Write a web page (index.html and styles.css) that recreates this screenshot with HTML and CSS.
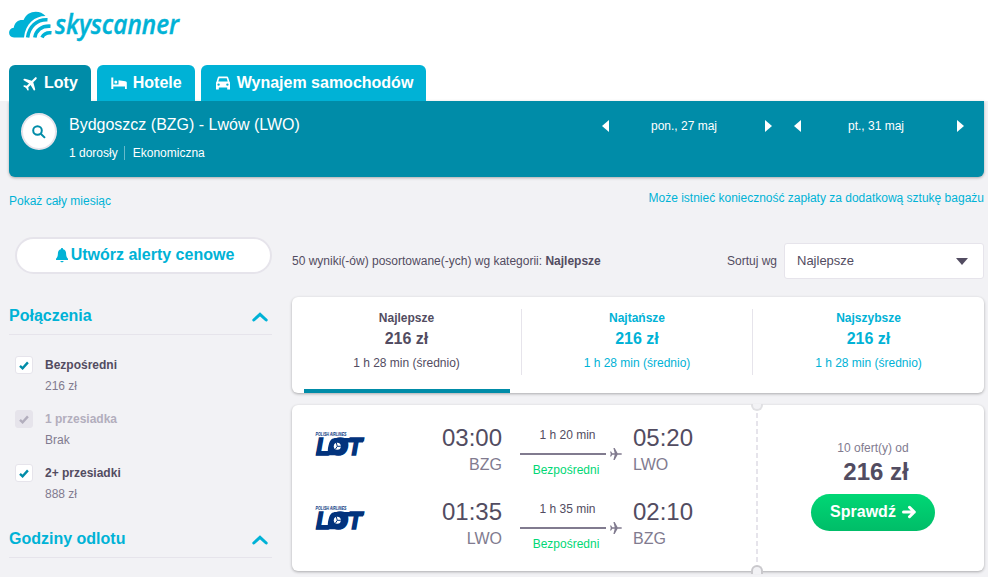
FILE: index.html
```
<!DOCTYPE html>
<html lang="pl">
<head>
    <meta charset="UTF-8">
    <meta name="viewport" content="width=device-width, initial-scale=1.0">
    <title>Skyscanner - Bydgoszcz - Lwów</title>
    <link rel="stylesheet" href="styles.css">
</head>
<body>
    <!-- shared icons -->
    <svg class="sprite" width="0" height="0">
        <symbol id="plane" viewBox="0 0 12 12">
            <path d="M12 6c0-.5-.6-.8-1.400-.8H7.600L4.700 0H3.400l1.300 5.200H2.300L1.100 3.500H0L.8 6 0 8.500h1.100l1.200-1.700h2.400L3.400 12h1.300l2.900-5.200h3c.8 0 1.400-.3 1.400-.8z"/>
        </symbol>
        <symbol id="check" viewBox="0 0 10 9">
            <path d="M1 4.800l2.600 2.500L8.900 1.400" fill="none" stroke="currentColor" stroke-width="2.400"/>
        </symbol>
        <symbol id="chevron" viewBox="0 0 16 10">
            <path d="M1.800 8L8 2.300 14.200 8" fill="none" stroke="currentColor" stroke-width="3" stroke-linecap="round"/>
        </symbol>
        <symbol id="lot" viewBox="0 0 50 26">
            <text class="lot-small" x="0.500" y="5" textLength="31" lengthAdjust="spacingAndGlyphs">POLISH AIRLINES</text>
            <text class="lot-big" x="1" y="23.700" textLength="46" lengthAdjust="spacingAndGlyphs">LOT</text>
            <g class="lot-fill">
                <path d="M1 24.300L2 20h13v4.300z"/>
                <path d="M15.500 24.300C12 24.300 12.500 18 13.800 13.500 15 9 17 7 21 7h9c3 0 3.200 4 2 8.500-1.500 6-4 8.800-8 8.800z"/>
                <path d="M24 7h25.200L48 11.500H24z"/>
            </g>
            <circle cx="22.300" cy="15.300" r="3.500" fill="#fff"/>
            <path d="M22.300 15.300h3.500M22.300 15.300l-1-3.500M22.300 15.300l-2 3" class="lot-line"/>
        </symbol>
    </svg>

    <header class="header">
        <div class="container">
            <svg class="logo" width="174" height="34" viewBox="0 0 174 34">
                <path d="M5 26.500C-1.500 26.500-1.500 17.300 4.800 16.800 5.500 10.800 10 8.300 14.600 9 18-.8 31-1.800 36.500 5 26 5 16.500 12.500 15 26.500z"/>
                <g class="logo-waves">
                    <path d="M18.600 26.500C20 16 27.500 8.300 38.500 8.800"/>
                    <path d="M25.800 26.500C27 20 32 14.700 41.500 15.200"/>
                    <path d="M33 26.500C34.500 23.300 38 21.300 42.500 21.800"/>
                </g>
                <text class="logo-text" x="46" y="23" textLength="124" lengthAdjust="spacingAndGlyphs">skyscanner</text>
            </svg>
            <nav class="tabs">
                <a class="tab active">
                    <svg class="tab-plane" width="16" height="16" viewBox="0 0 12 12"><use href="#plane"/></svg>
                    Loty
                </a>
                <a class="tab">
                    <svg width="16" height="16" viewBox="0 0 16 16">
                        <path d="M.3 2.500h2v7h5.200V5.300l6.800.9c1 .1 1.500.7 1.500 1.500V14h-1.800v-2.500H2.300V14h-2z"/>
                        <circle cx="4.800" cy="7" r="1.500"/>
                    </svg>
                    Hotele
                </a>
                <a class="tab">
                    <svg width="16" height="16" viewBox="0 0 16 16">
                        <path fill-rule="evenodd" d="M4 1.500h8c.6 0 1 .3 1.200.9l1.300 4.300c.3.300.5.700.5 1.100V14.500h-2.800v-2H3.800v2H1V7.800c0-.4.200-.8.500-1.100l1.300-4.300c.2-.6.600-.9 1.200-.9zM4.300 3.200L3.300 6.500h9.400l-1-3.300zM3.600 8.400a1.200 1.200 0 1 0 0 2.400 1.200 1.200 0 0 0 0-2.400zM12.400 8.400a1.200 1.200 0 1 0 0 2.400 1.200 1.200 0 0 0 0-2.400z"/>
                    </svg>
                    Wynajem samochodów
                </a>
            </nav>
        </div>
    </header>

    <div class="container">
        <section class="search">
            <button class="search-btn">
                <svg width="14" height="14" viewBox="0 0 14 14">
                    <circle cx="5.500" cy="5.500" r="4.300"/>
                    <path d="M8.700 8.700l4.300 4.200"/>
                </svg>
            </button>
            <div class="search-info">
                <div class="route">Bydgoszcz (BZG) - Lwów (LWO)</div>
                <div class="details"><span>1 dorosły</span><span class="cabin">Ekonomiczna</span></div>
            </div>
            <div class="dates">
                <div class="date">
                    <i class="arrow left"></i><span>pon., 27 maj</span><i class="arrow right"></i>
                </div>
                <div class="date">
                    <i class="arrow left"></i><span>pt., 31 maj</span><i class="arrow right"></i>
                </div>
            </div>
        </section>

        <div class="links">
            <a class="month">Pokaż cały miesiąc</a>
            <a>Może istnieć konieczność zapłaty za dodatkową sztukę bagażu</a>
        </div>

        <div class="content">
            <aside class="sidebar">
                <button class="alert-btn">
                    <svg width="12" height="15" viewBox="0 0 12 15">
                        <path d="M6 0c.7 0 1.100.5 1.100 1.200C9.200 1.700 10 3.500 10.100 5.500c.1 2.700.5 4 1.900 5.200V12H0v-1.300c1.400-1.200 1.800-2.500 1.900-5.200C2 3.500 2.800 1.700 4.900 1.200 4.900.5 5.300 0 6 0zM4.300 13h3.400c-.2.900-.9 1.300-1.700 1.300S4.500 13.900 4.300 13z"/>
                    </svg>
                    Utwórz alerty cenowe
                </button>

                <h2 class="filter-title">Połączenia <svg width="16" height="10"><use href="#chevron"/></svg></h2>
                <ul class="filters">
                    <li>
                        <span class="checkbox"><svg width="10" height="9"><use href="#check"/></svg></span>
                        <div><b>Bezpośredni</b><span>216 zł</span></div>
                    </li>
                    <li class="disabled">
                        <span class="checkbox"><svg width="10" height="9"><use href="#check"/></svg></span>
                        <div><b>1 przesiadka</b><span>Brak</span></div>
                    </li>
                    <li>
                        <span class="checkbox"><svg width="10" height="9"><use href="#check"/></svg></span>
                        <div><b>2+ przesiadki</b><span>888 zł</span></div>
                    </li>
                </ul>
                <h2 class="filter-title">Godziny odlotu <svg width="16" height="10"><use href="#chevron"/></svg></h2>
            </aside>

            <main class="results">
                <div class="toolbar">
                    <div class="count">50 wyniki(-ów) posortowane(-ych) wg kategorii: <b>Najlepsze</b></div>
                    <div class="sort">
                        Sortuj wg
                        <div class="select">Najlepsze <i class="caret"></i></div>
                    </div>
                </div>

                <div class="card sort-tabs">
                    <div class="sort-tab active">
                        <b>Najlepsze</b>
                        <strong>216 zł</strong>
                        <span>1 h 28 min (średnio)</span>
                    </div>
                    <div class="sort-tab">
                        <b>Najtańsze</b>
                        <strong>216 zł</strong>
                        <span>1 h 28 min (średnio)</span>
                    </div>
                    <div class="sort-tab">
                        <b>Najszybsze</b>
                        <strong>216 zł</strong>
                        <span>1 h 28 min (średnio)</span>
                    </div>
                </div>

                <div class="card ticket">
                    <div class="legs">
                        <div class="leg">
                            <svg class="airline" width="50" height="26"><use href="#lot"/></svg>
                            <div class="point depart"><span class="time">03:00</span><span>BZG</span></div>
                            <div class="stops">
                                <span>1 h 20 min</span>
                                <div class="line"><i></i><svg width="12" height="12"><use href="#plane"/></svg></div>
                                <span class="direct">Bezpośredni</span>
                            </div>
                            <div class="point"><span class="time">05:20</span><span>LWO</span></div>
                        </div>
                        <div class="leg">
                            <svg class="airline" width="50" height="26"><use href="#lot"/></svg>
                            <div class="point depart"><span class="time">01:35</span><span>LWO</span></div>
                            <div class="stops">
                                <span>1 h 35 min</span>
                                <div class="line"><i></i><svg width="12" height="12"><use href="#plane"/></svg></div>
                                <span class="direct">Bezpośredni</span>
                            </div>
                            <div class="point"><span class="time">02:10</span><span>BZG</span></div>
                        </div>
                    </div>
                    <div class="stub">
                        <i class="notch top"></i>
                        <i class="notch bottom"></i>
                        <div class="offer">
                            <span>10 ofert(y) od</span>
                            <strong>216 zł</strong>
                        </div>
                        <button class="check-btn">
                            Sprawdź
                            <svg width="14" height="14" viewBox="0 0 14 14"><path d="M1.500 7h10.800M7.500 2.300L12.300 7l-4.800 4.700"/></svg>
                        </button>
                    </div>
                </div>
            </main>
        </div>
    </div>
</body>
</html>
```
FILE: styles.css
```
* {
    box-sizing: border-box;
}

body {
    margin: 0;
    height: 577px;
    overflow: hidden;
    background: #f2f2f5;
    color: #524c61;
    font-family: "Liberation Sans", Arial, sans-serif;
    font-size: 12px;
    line-height: 18px;
}

button {
    font-family: inherit;
    padding: 0;
    cursor: pointer;
}

.sprite {
    display: none;
}

.container {
    width: 975px;
    margin-left: 9px;
}

/* header */
.header {
    height: 101px;
    background: #fff;
}

.header .container {
    display: flex;
    flex-direction: column;
    justify-content: space-between;
    height: 101px;
    padding-top: 11px;
}

.logo {
    overflow: visible;
    fill: #00b2d6;
}

.logo-waves {
    fill: none;
    stroke: #00b2d6;
    stroke-width: 3.600;
}

.logo-text {
    font-family: "Open Sans", sans-serif;
    font-size: 27px;
    font-style: italic;
    font-weight: 600;
    stroke: #00b2d6;
    stroke-width: 0.400;
}

.tabs {
    display: flex;
    gap: 6px;
}

.tab {
    display: flex;
    align-items: center;
    gap: 6px;
    height: 36px;
    padding: 0 13px 1px 14px;
    border-radius: 6px 6px 0 0;
    background: #00b2d6;
    color: #fff;
    font-size: 16px;
    font-weight: bold;
}

.tab.active {
    background: #008ca8;
}

.tab svg {
    fill: #fff;
}

.tab-plane {
    margin-right: -1px;
    transform: rotate(-45deg);
}

/* search summary */
.search {
    display: flex;
    height: 76px;
    padding: 12px 20px 0 12px;
    border-radius: 0 0 6px 6px;
    background: #008ca8;
    box-shadow: 0 1px 3px rgba(0, 0, 0, 0.3);
    color: #fff;
}

.search-btn {
    width: 36px;
    height: 37px;
    border: 2px solid #e6e4eb;
    border-radius: 50%;
    background: #fff;
}

.search-btn svg {
    display: block;
    margin: 0 auto;
    fill: none;
    stroke: #008ca8;
    stroke-width: 2;
}

.search-info {
    margin-left: 12px;
}

.route {
    font-size: 16px;
    line-height: 24px;
}

.details {
    display: flex;
    margin-top: 9px;
    line-height: 14px;
}

.cabin {
    margin-left: 6px;
    padding-left: 8px;
    border-left: 1px solid #66bacb;
}

.dates {
    display: flex;
    gap: 22px;
    margin-left: auto;
    padding-top: 2px;
}

.date {
    display: flex;
    align-items: center;
    justify-content: space-between;
    width: 170px;
    height: 21px;
}

.date span {
    padding: 1px 6px 0 0;
}

.arrow {
    border: 6px solid transparent;
}

.arrow.left {
    border-left: 0;
    border-right: 7px solid #fff;
}

.arrow.right {
    border-right: 0;
    border-left: 7px solid #fff;
}

.links {
    display: flex;
    justify-content: space-between;
    height: 60px;
    padding-top: 12px;
    color: #00b2d6;
}

.month {
    margin-top: 3px;
}

.content {
    display: flex;
    justify-content: space-between;
}

/* filters */
.sidebar {
    width: 263px;
}

.alert-btn {
    display: flex;
    align-items: center;
    justify-content: center;
    gap: 3px;
    width: 257px;
    height: 37px;
    margin-left: 6px;
    padding: 0 0 2px 3px;
    border: 2px solid #e6e4eb;
    border-radius: 19px;
    background: #fff;
    color: #00b2d6;
    font-size: 16px;
    font-weight: bold;
}

.alert-btn svg {
    margin-top: 1px;
    fill: #00b2d6;
}

.filter-title {
    display: flex;
    align-items: center;
    justify-content: space-between;
    height: 37px;
    margin: 24px 0 0;
    padding-right: 4px;
    border-bottom: 1px solid #e6e4eb;
    color: #00b2d6;
    font-size: 16px;
}

.filter-title svg {
    margin-top: 2px;
}

.filters {
    display: flex;
    flex-direction: column;
    gap: 12px;
    margin: 0 0 -8px;
    padding: 20px 0 0 6px;
    list-style: none;
}

.filters li {
    display: flex;
    gap: 12px;
}

.filters b,
.filters span {
    display: block;
    line-height: 21px;
}

.filters div span {
    color: #817b8f;
}

.filters .checkbox {
    display: flex;
    align-items: center;
    justify-content: center;
    width: 18px;
    height: 18px;
    margin-top: 1px;
    border: 1px solid #e6e4eb;
    border-radius: 3px;
    background: #fff;
    color: #008ca8;
}

.disabled b {
    color: #b2aebd;
}

.filters .disabled .checkbox {
    background: #e6e4eb;
    color: #b2aebd;
}

/* results */
.results {
    width: 692px;
    padding-top: 6px;
}

.toolbar {
    display: flex;
    align-items: center;
    justify-content: space-between;
    height: 36px;
    margin-bottom: 18px;
}

.sort {
    display: flex;
    align-items: center;
    gap: 7px;
}

.select {
    display: flex;
    align-items: center;
    justify-content: space-between;
    width: 200px;
    height: 36px;
    padding: 0 15px 0 12px;
    border: 1px solid #e6e4eb;
    border-radius: 3px;
    background: #fff;
    font-size: 13px;
}

.caret {
    border: 6px solid transparent;
    border-top: 7px solid #524c61;
    border-bottom: 0;
}

.card {
    border-radius: 6px;
    background: #fff;
    box-shadow: 0 1px 3px rgba(0, 0, 0, 0.3);
}

.sort-tabs {
    display: grid;
    grid-template-columns: 229px 231px 232px;
    height: 96px;
    margin-bottom: 12px;
}

.sort-tab {
    position: relative;
    display: flex;
    flex-direction: column;
    align-items: center;
    height: 66px;
    margin-top: 12px;
    color: #00b2d6;
}

.sort-tab + .sort-tab {
    border-left: 1px solid #e6e4eb;
}

.sort-tab strong {
    font-size: 16px;
    line-height: 24px;
}

.sort-tab span {
    margin-top: 3px;
}

.sort-tab.active {
    color: #524c61;
}

.sort-tab.active::after {
    content: "";
    position: absolute;
    left: 12px;
    right: 11px;
    bottom: -18px;
    height: 4px;
    background: #008ca8;
}

.ticket {
    display: flex;
    height: 166px;
}

.legs {
    display: flex;
    flex-direction: column;
    gap: 20px;
    width: 464px;
    padding: 19px 0 0 23px;
}

.leg {
    display: flex;
    height: 54px;
}

.airline {
    margin-top: 7px;
}

.lot-big,
.lot-fill {
    fill: #02337d;
}

.lot-small {
    fill: #02337d;
    font-size: 5px;
    font-style: italic;
    font-weight: bold;
}

.lot-big {
    stroke: #02337d;
    stroke-width: 1.500;
    font-size: 23px;
    font-style: italic;
    font-weight: bold;
}

.lot-line {
    stroke: #02337d;
    stroke-width: 1;
}

.point {
    display: flex;
    flex-direction: column;
    width: 100px;
    color: #817b8f;
    font-size: 16px;
    line-height: 25px;
}

.depart {
    width: 137px;
    text-align: right;
}

.time {
    color: #524c61;
    font-size: 24px;
    line-height: 28px;
}

.stops {
    display: flex;
    flex-direction: column;
    width: 102px;
    margin: 0 11px 0 18px;
    padding-top: 2px;
}

.stops span {
    width: 95px;
    text-align: center;
}

.line {
    display: flex;
    align-items: center;
    gap: 4px;
    height: 20px;
}

.line i {
    width: 86px;
    height: 2px;
    background: #817b8f;
}

.line svg {
    fill: #817b8f;
}

.stops .direct {
    width: 92px;
    line-height: 12px;
    color: #00d775;
}

.stub {
    position: relative;
    display: flex;
    flex-direction: column;
    align-items: center;
    width: 228px;
    padding: 34px 0 0 6px;
    background: repeating-linear-gradient(#fff 0 3px, #e6e4eb 3px 8px) 0 5px / 2px 154px no-repeat;
}

/* half circles cut out of the ticket edge */
.notch {
    position: absolute;
    left: -5px;
    width: 12px;
    background: #f2f2f5;
}

.notch.top {
    top: -1px;
    height: 7px;
    border: 2px solid #e0e0e3;
    border-top: 0;
    border-radius: 0 0 6px 6px;
}

.notch.bottom {
    bottom: -3px;
    height: 9px;
    border: 2px solid #c9c8cc;
    border-bottom: 0;
    border-radius: 6px 6px 0 0;
}

.offer {
    display: flex;
    flex-direction: column;
    color: #817b8f;
    text-align: right;
}

.offer strong {
    color: #524c61;
    font-size: 24px;
    line-height: 30px;
}

.check-btn {
    display: flex;
    align-items: center;
    justify-content: center;
    gap: 6px;
    width: 124px;
    height: 37px;
    margin-top: 7px;
    padding-bottom: 2px;
    border: 0;
    border-radius: 19px;
    background: linear-gradient(#00d775, #00bd68);
    color: #fff;
    font-size: 16px;
    font-weight: bold;
}

.check-btn svg {
    margin-top: 1px;
    fill: none;
    stroke: #fff;
    stroke-width: 3;
    stroke-linecap: round;
    stroke-linejoin: round;
}
```
